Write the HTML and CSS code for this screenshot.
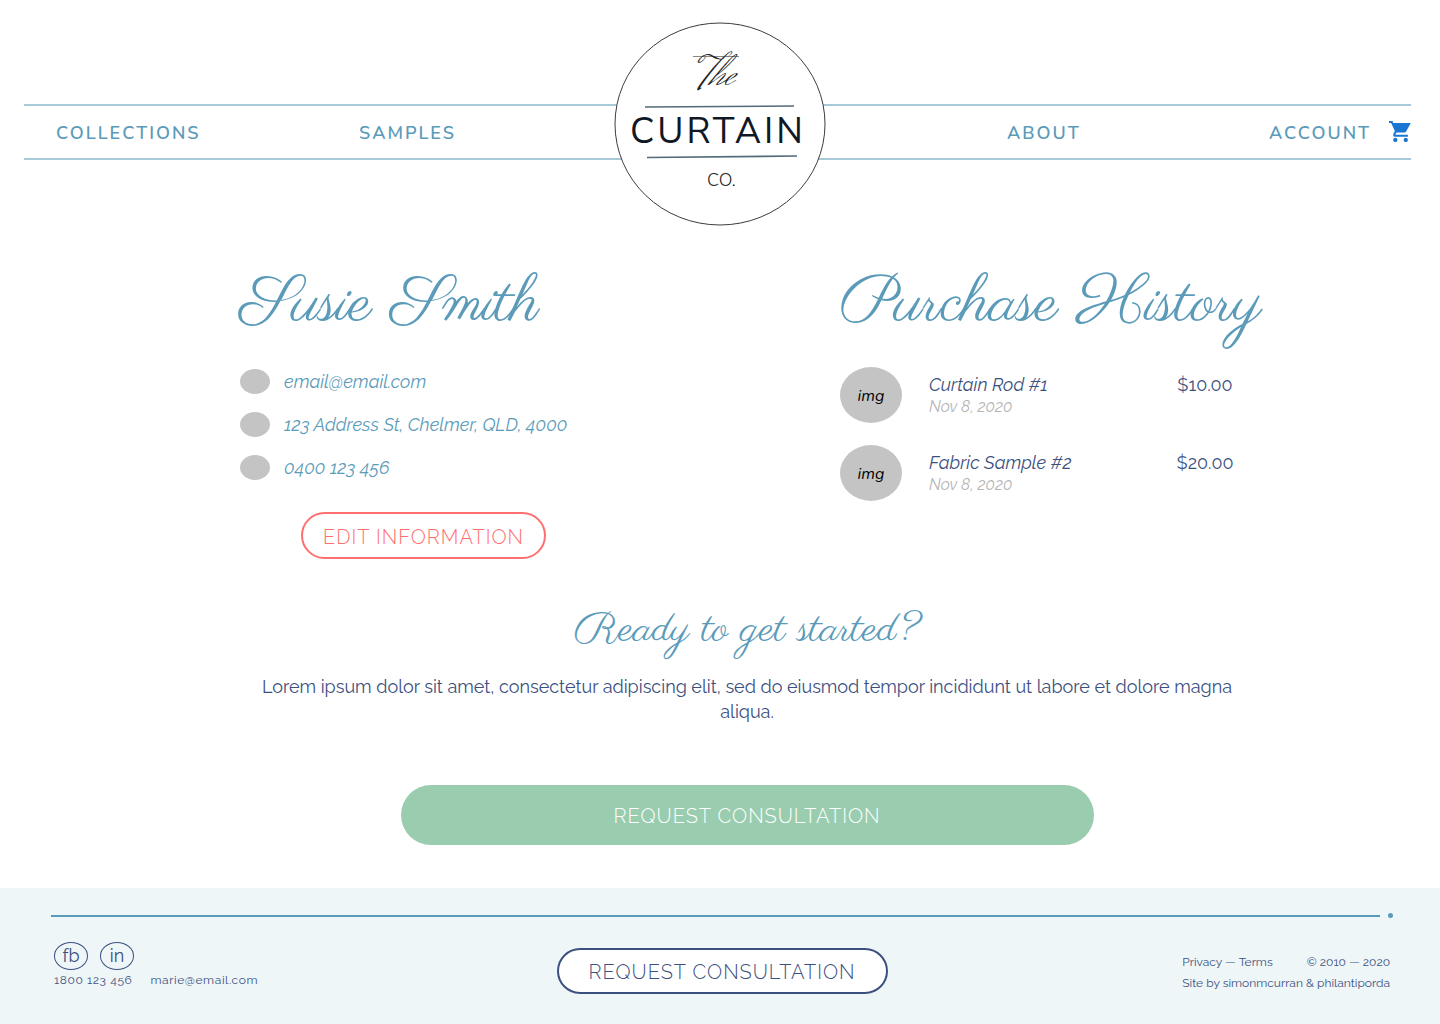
FILE: index.html
```html
<!DOCTYPE html>
<html lang="en">
<head>
<meta charset="utf-8">
<meta name="viewport" content="width=device-width, initial-scale=1">
<title>Account – The Curtain Co.</title>
<link rel="stylesheet" href="styles.css">
</head>
<body>
<header class="header">
  <nav class="nav" aria-label="Main">
    <a href="#collections">COLLECTIONS</a>
    <a href="#samples">SAMPLES</a>
    <a href="#about">ABOUT</a>
    <div class="account">
      <a href="#account">ACCOUNT</a>
      <a class="cart" href="#cart" aria-label="Cart">
        <svg width="22" height="21" viewBox="1 2 21 20" preserveAspectRatio="none" fill="#1976d2" aria-hidden="true"><path d="M7 18c-1.100 0-1.990.9-1.990 2S5.900 22 7 22s2-.9 2-2-.9-2-2-2zM1 2v2h2l3.600 7.590-1.350 2.450c-.16.280-.25.610-.25.960 0 1.100.9 2 2 2h12v-2H7.420c-.14 0-.25-.11-.25-.25l.03-.12.900-1.630h7.450c.75 0 1.410-.41 1.750-1.030L21.800 4H5.210l-.94-2H1zm16 16c-1.100 0-1.990.9-1.990 2s.89 2 1.990 2 2-.9 2-2-.9-2-2-2z"/></svg>
      </a>
    </div>
  </nav>
  <a class="logo" href="#home" aria-label="The Curtain Co.">
    <svg width="212" height="205" viewBox="0 0 212 205">
      <ellipse cx="106" cy="102" rx="105" ry="101" fill="#fff" stroke="#3c3c40"/>
      <path d="M79 34.500h46" stroke="#888" stroke-width="1"/>
      <text class="logo-the" x="83" y="63">The</text>
      <path d="M31 85l149-1M33 135.500l150-1.500" stroke="#526b78" stroke-width="1.600"/>
      <text class="logo-name" x="16" y="121">CURTAIN</text>
      <text class="logo-co" x="93" y="164">CO.</text>
    </svg>
  </a>
</header>

<main>
  <div class="columns">
    <section class="profile">
      <h1 class="title">Susie Smith</h1>
      <ul class="details">
        <li><span class="dot"></span>email@email.com</li>
        <li><span class="dot"></span>123 Address St, Chelmer, QLD, 4000</li>
        <li><span class="dot"></span>0400 123 456</li>
      </ul>
      <button class="button button-edit" type="button">EDIT INFORMATION</button>
    </section>
    <section class="history">
      <h2 class="title">Purchase History</h2>
      <ul class="orders">
        <li class="order">
          <span class="thumb">img</span>
          <div><p class="item">Curtain Rod #1</p><p class="date">Nov 8, 2020</p></div>
          <span class="price">$10.00</span>
        </li>
        <li class="order">
          <span class="thumb">img</span>
          <div><p class="item">Fabric Sample #2</p><p class="date">Nov 8, 2020</p></div>
          <span class="price">$20.00</span>
        </li>
      </ul>
    </section>
  </div>
  <section class="cta">
    <h2 class="subtitle">Ready to get started?</h2>
    <p class="lead">Lorem ipsum dolor sit amet, consectetur adipiscing elit, sed do eiusmod tempor incididunt ut labore et dolore magna aliqua.</p>
    <button class="button button-request" type="button">REQUEST CONSULTATION</button>
  </section>
</main>

<footer class="footer">
  <div class="rule"><span class="rule-line"></span><span class="rule-dot"></span></div>
  <div class="footer-row">
    <div class="contact">
      <div class="social"><a href="#facebook">fb</a><a href="#linkedin">in</a></div>
      <div class="reach"><a href="tel:1800123456">1800 123 456</a><a href="mailto:marie@email.com">marie@email.com</a></div>
    </div>
    <button class="button button-footer" type="button">REQUEST CONSULTATION</button>
    <div class="legal">
      <div class="legal-row"><span><a href="#privacy">Privacy</a> — <a href="#terms">Terms</a></span><span>© 2010 — 2020</span></div>
      <p>Site by simonmcurran &amp; philantiporda</p>
    </div>
  </div>
</footer>
</body>
</html>
```
FILE: styles.css
```css
* { box-sizing: border-box; }

body {
  margin: 0;
  min-height: 100vh;
  display: flex;
  flex-direction: column;
  background: #fff;
  color: #3c5080;
  font-family: Raleway, Lato, sans-serif;
  font-size: 18px;
  line-height: 25px;
}

h1, h2, p, ul { margin: 0; padding: 0; }
ul { list-style: none; }
a { color: inherit; text-decoration: none; }
main { flex: 1; }

/* The logo and the nav bar share one grid cell, so the logo overlaps the bar. */
.header {
  display: grid;
  padding: 22px 24px 0;
}

.nav {
  grid-area: 1 / 1;
  align-self: start;
  display: grid;
  grid-template-columns: 303fr 648fr 262fr 142fr;
  align-items: center;
  height: 56px;
  margin: 82px 5px 0 0;
  padding: 2px 0 0 32px;
  border: solid #a9cbd9;
  border-width: 2px 0;
  color: #5b9bb9;
  font-family: Nunito, Lato, sans-serif;
  font-size: 18px;
  font-weight: 600;
  letter-spacing: 2px;
}

.account { display: flex; justify-content: space-between; align-items: center; }
.cart { display: flex; padding-bottom: 4px; }

.logo { grid-area: 1 / 1; justify-self: center; display: flex; }
.logo-the { font: 44px "Herr Von Muellerhoff", Sacramento, "Liberation Serif", serif; fill: #222; }
.logo-name { font: 36px "Nunito Sans", Lato, sans-serif; letter-spacing: 3px; fill: #101826; }
.logo-co { font: 300 18px "Nunito Sans", Lato, sans-serif; fill: #222; }

.columns {
  display: grid;
  grid-template-columns: 240fr 600fr 422fr 178fr;
  padding-top: 38px;
}
.profile { grid-column: 2; }
.history { grid-column: 3; }

.title, .subtitle {
  color: #5b9bb9;
  font-family: Parisienne, "Liberation Serif", serif;
  font-weight: 400;
  white-space: nowrap;
}
.title { font-size: 64px; line-height: 80px; }
.subtitle { font-size: 42px; line-height: 56px; }

.details {
  display: grid;
  gap: 18px;
  padding-top: 24px;
  color: #5b9bb9;
  font-style: italic;
}
.details li { display: flex; align-items: center; gap: 14px; }
.dot { width: 30px; height: 25px; border-radius: 50%; background: #c4c4c4; }

.button {
  display: block;
  height: 46px;
  padding: 2px 0 0;
  border: 2px solid;
  border-radius: 30px;
  background: #fff;
  font: 300 20px/24px Raleway, Lato, sans-serif;
  letter-spacing: 1px;
}
.button-edit { width: 245px; height: 47px; margin: 32px 0 0 61px; color: #ff6f6f; }
.button-footer { width: 331px; margin-top: 6px; color: #3c5080; }
.button-request {
  width: 50%;
  height: 60px;
  margin-top: 61px;
  border: 0;
  background: #9acdaf;
  color: #fff;
}

.orders { display: grid; gap: 22px; padding-top: 22px; }
.order {
  display: grid;
  grid-template-columns: 62px 1fr 58px;
  column-gap: 27px;
  padding-right: 28px;
}
.thumb {
  display: grid;
  place-items: center;
  height: 56px;
  padding-top: 2px;
  border-radius: 50%;
  background: #c4c4c4;
  color: #000;
  font-family: Nunito, Lato, sans-serif;
  font-size: 16px;
  font-style: italic;
}
.item { padding-top: 5px; font-style: italic; }
.date { color: #b5b5b5; font-size: 16px; font-style: italic; line-height: 20px; }
.price { padding-top: 5px; text-align: center; }

.cta {
  display: flex;
  flex-direction: column;
  align-items: center;
  padding: 44px 0 43px 54px;
  text-align: center;
}
.lead { max-width: 980px; padding-top: 15px; }

.footer {
  padding: 25px 47px 30px 51px;
  background: #eef6f8;
  font-size: 12px;
  line-height: 21px;
}
.rule { display: flex; align-items: center; gap: 8px; height: 5px; }
.rule-line { flex: 1; height: 2px; background: #5b9bb9; }
.rule-dot { width: 5px; height: 5px; border-radius: 50%; background: #5b9bb9; }
.footer-row {
  display: grid;
  grid-template-columns: 1fr auto 1fr;
  align-items: start;
  padding: 24px 3px 0;
}
.social { display: flex; gap: 12px; }
.social a {
  width: 34px;
  height: 28px;
  border: 1px solid #3c5080;
  border-radius: 50%;
  font-size: 18px;
  line-height: 25px;
  text-align: center;
}
.reach { display: flex; gap: 18px; letter-spacing: 0.05em; }
.legal { justify-self: end; padding-top: 10px; }
.legal-row { display: flex; justify-content: space-between; }
```
